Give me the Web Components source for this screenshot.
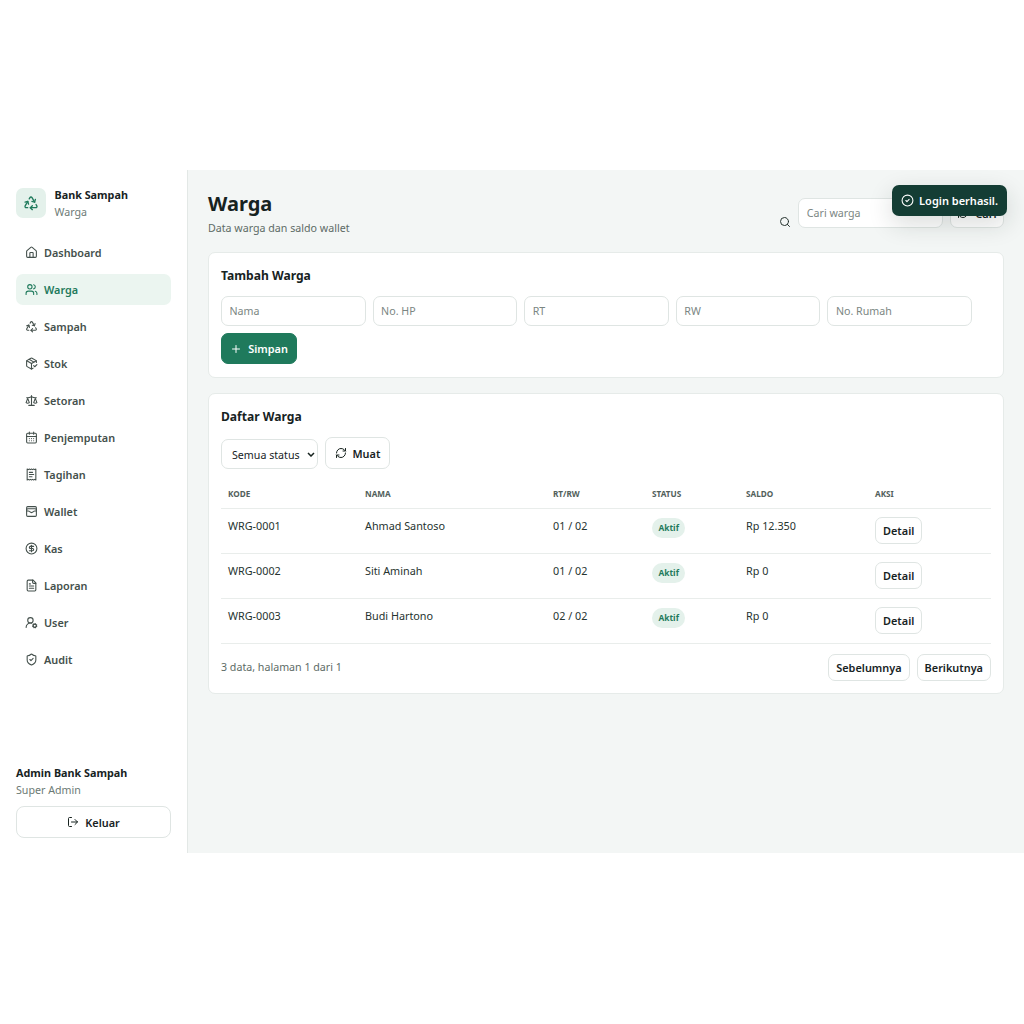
<!DOCTYPE html>
<html lang="id">
<head>
<meta charset="utf-8">
<title>Warga</title>
<style>
  html, body { margin: 0; height: 100%; background: #fff; }
  body { box-sizing: border-box; padding-top: 170px; font-family: "Noto Sans", sans-serif; color: #17231f; }
  bank-app { width: 1024px; }
</style>
</head>
<body>
<bank-app></bank-app>
<script>
const ICONS = {
  recycle: '<path d="M7 19H4.815a1.83 1.83 0 0 1-1.57-.881 1.785 1.785 0 0 1-.004-1.784L7.196 9.5"/><path d="M11 19h8.203a1.83 1.83 0 0 0 1.556-.89 1.784 1.784 0 0 0 0-1.775l-1.226-2.12"/><path d="m14 16-3 3 3 3"/><path d="M8.293 13.596 7.196 9.5 3.1 10.598"/><path d="m9.344 5.811 1.093-1.892A1.83 1.83 0 0 1 11.985 3a1.784 1.784 0 0 1 1.546.888l3.943 6.843"/><path d="m13.378 9.633 4.096 1.098 1.097-4.096"/>',
  house: '<path d="M15 21v-8a1 1 0 0 0-1-1h-4a1 1 0 0 0-1 1v8"/><path d="M3 10a2 2 0 0 1 .709-1.528l7-5.999a2 2 0 0 1 2.582 0l7 5.999A2 2 0 0 1 21 10v9a2 2 0 0 1-2 2H5a2 2 0 0 1-2-2z"/>',
  users: '<path d="M16 21v-2a4 4 0 0 0-4-4H6a4 4 0 0 0-4 4v2"/><circle cx="9" cy="7" r="4"/><path d="M22 21v-2a4 4 0 0 0-3-3.87"/><path d="M16 3.13a4 4 0 0 1 0 7.75"/>',
  package: '<path d="m16 16 2 2 4-4"/><path d="M21 10V8a2 2 0 0 0-1-1.73l-7-4a2 2 0 0 0-2 0l-7 4A2 2 0 0 0 3 8v8a2 2 0 0 0 1 1.73l7 4a2 2 0 0 0 2 0l2-1.14"/><path d="m7.5 4.27 9 5.15"/><polyline points="3.29 7 12 12 20.71 7"/><line x1="12" y1="22" x2="12" y2="12"/>',
  scale: '<path d="m16 16 3-8 3 8c-.87.65-1.92 1-3 1s-2.13-.35-3-1Z"/><path d="m2 16 3-8 3 8c-.87.65-1.92 1-3 1s-2.13-.35-3-1Z"/><path d="M7 21h10"/><path d="M12 3v18"/><path d="M3 7h2c2 0 5-1 7-2 2 1 5 2 7 2h2"/>',
  calendar: '<path d="M8 2v4"/><path d="M16 2v4"/><rect x="3" y="4" width="18" height="18" rx="2"/><path d="M3 10h18"/><path d="M8 14h.01"/><path d="M12 14h.01"/><path d="M16 14h.01"/><path d="M8 18h.01"/><path d="M12 18h.01"/><path d="M16 18h.01"/>',
  receipt: '<path d="M4 2v20l2-1 2 1 2-1 2 1 2-1 2 1 2-1 2 1V2l-2 1-2-1-2 1-2-1-2 1-2-1-2 1Z"/><path d="M14 8H8"/><path d="M16 12H8"/><path d="M13 16H8"/>',
  wallet: '<rect x="3" y="3" width="18" height="18" rx="2"/><path d="M3 9a2 2 0 0 1 2-2h14a2 2 0 0 1 2 2"/><path d="M3 11h3c.8 0 1.6.3 2.1.9l1.1.9c1.6 1.6 4.1 1.6 5.7 0l1.1-.9c.5-.5 1.3-.9 2.1-.9H21"/>',
  dollar: '<circle cx="12" cy="12" r="10"/><path d="M16 8h-6a2 2 0 1 0 0 4h4a2 2 0 1 1 0 4H8"/><path d="M12 18V6"/>',
  file: '<path d="M15 2H6a2 2 0 0 0-2 2v16a2 2 0 0 0 2 2h12a2 2 0 0 0 2-2V7Z"/><path d="M14 2v4a2 2 0 0 0 2 2h4"/><path d="M10 9H8"/><path d="M16 13H8"/><path d="M16 17H8"/>',
  usercog: '<path d="M2 21a8 8 0 0 1 10.434-7.62"/><circle cx="10" cy="8" r="5"/><circle cx="18" cy="18" r="3"/><path d="m19.5 14.3-.4.9"/><path d="m16.9 20.8-.4.9"/><path d="m21.7 19.5-.9-.4"/><path d="m15.2 16.9-.9-.4"/><path d="m21.7 16.5-.9.4"/><path d="m15.2 19.1-.9.4"/><path d="m19.5 21.7-.4-.9"/><path d="m16.9 15.2-.4-.9"/>',
  shield: '<path d="M20 13c0 5-3.5 7.5-7.66 8.95a1 1 0 0 1-.67-.01C7.5 20.5 4 18 4 13V6a1 1 0 0 1 1-1c2 0 4.5-1.2 6.24-2.72a1.17 1.17 0 0 1 1.52 0C14.51 3.81 17 5 19 5a1 1 0 0 1 1 1z"/><path d="m9 12 2 2 4-4"/>',
  logout: '<path d="M9 21H5a2 2 0 0 1-2-2V5a2 2 0 0 1 2-2h4"/><path d="m16 17 5-5-5-5"/><path d="M21 12H9"/>',
  search: '<path d="m21 21-4.34-4.34"/><circle cx="11" cy="11" r="8"/>',
  refresh: '<path d="M3 12a9 9 0 0 1 9-9 9.75 9.75 0 0 1 6.74 2.74L21 8"/><path d="M21 3v5h-5"/><path d="M21 12a9 9 0 0 1-9 9 9.75 9.75 0 0 1-6.74-2.74L3 16"/><path d="M8 16H3v5"/>',
  plus: '<path d="M5 12h14"/><path d="M12 5v14"/>',
  check: '<circle cx="12" cy="12" r="10"/><path d="m9 12 2 2 4-4"/>'
};

class AppIcon extends HTMLElement {
  connectedCallback() {
    const size = this.getAttribute('size') || 13;
    this.attachShadow({ mode: 'open' }).innerHTML = `
      <style>
        :host { display: inline-flex; flex: none; }
        svg { display: block; }
      </style>
      <svg width="${size}" height="${size}" viewBox="0 0 24 24" fill="none" stroke="currentColor"
        stroke-width="2" stroke-linecap="round" stroke-linejoin="round">${ICONS[this.getAttribute('name')]}</svg>`;
  }
}
customElements.define('app-icon', AppIcon);

class NavItem extends HTMLElement {
  connectedCallback() {
    this.attachShadow({ mode: 'open' }).innerHTML = `
      <style>
        :host {
          display: flex; align-items: center; gap: 6px;
          height: 31px; padding: 0 9px; border-radius: 7px;
          font-size: 10.85px; font-weight: 600; color: #44504c;
        }
        :host([active]) { background: #ebf5f0; color: #1f7a5c; }
      </style>
      <app-icon name="${this.getAttribute('icon')}"></app-icon><slot></slot>`;
  }
}
customElements.define('nav-item', NavItem);

class UiButton extends HTMLElement {
  connectedCallback() {
    const icon = this.getAttribute('icon');
    this.attachShadow({ mode: 'open' }).innerHTML = `
      <style>
        :host {
          display: inline-flex; align-items: center; justify-content: center; gap: 6px;
          box-sizing: border-box; height: 27px; padding: 0 7px;
          background: #fff; border: 1px solid #dfe5e3; border-radius: 7px;
          font-size: 10.9px; font-weight: 600; color: #17231f; white-space: nowrap;
        }
        :host([primary]) { background: #1f7a5c; border-color: #1f7a5c; color: #fff; }
      </style>
      ${icon ? `<app-icon name="${icon}" size="${this.getAttribute('icon-size') || 12}"></app-icon>` : ''}<slot></slot>`;
  }
}
customElements.define('ui-button', UiButton);

class SideBar extends HTMLElement {
  connectedCallback() {
    const items = [
      ['house', 'Dashboard'], ['users', 'Warga', 1], ['recycle', 'Sampah'], ['package', 'Stok'],
      ['scale', 'Setoran'], ['calendar', 'Penjemputan'], ['receipt', 'Tagihan'], ['wallet', 'Wallet'],
      ['dollar', 'Kas'], ['file', 'Laporan'], ['usercog', 'User'], ['shield', 'Audit']
    ];
    this.attachShadow({ mode: 'open' }).innerHTML = `
      <style>
        :host {
          display: flex; flex-direction: column; flex: none; box-sizing: border-box;
          width: 188px; padding: 18px 16px 15px;
          background: #fff; border-right: 1px solid #e3e8e6;
        }
        .brand { display: flex; align-items: center; gap: 8.5px; height: 30px; }
        .brand > div:last-child { margin-top: 2px; }
        .logo {
          display: flex; align-items: center; justify-content: center;
          width: 30px; height: 30px; border-radius: 7px; background: #e4f1eb; color: #1f7a5c;
        }
        .brand b, .who b { display: block; font-size: 10.8px; font-weight: 700; line-height: 16px; color: #17231f; }
        .brand span, .who span { display: block; font-size: 10.67px; line-height: 18px; color: #6c7a75; }
        nav { display: flex; flex-direction: column; gap: 6px; margin-top: 19px; }
        .who { margin-top: auto; margin-bottom: 7px; }
        ui-button { height: 32px; border-radius: 8px; }
      </style>
      <div class="brand">
        <div class="logo"><app-icon name="recycle" size="16"></app-icon></div>
        <div><b>Bank Sampah</b><span>Warga</span></div>
      </div>
      <nav>${items.map(i => `<nav-item icon="${i[0]}"${i[2] ? ' active' : ''}>${i[1]}</nav-item>`).join('')}</nav>
      <div class="who"><b>Admin Bank Sampah</b><span>Super Admin</span></div>
      <ui-button icon="logout">Keluar</ui-button>`;
  }
}
customElements.define('side-bar', SideBar);

class CardPanel extends HTMLElement {
  connectedCallback() {
    this.attachShadow({ mode: 'open' }).innerHTML = `
      <style>
        :host {
          display: block; box-sizing: border-box; padding: 12px;
          background: #fff; border: 1px solid #e6ebe9; border-radius: 7px;
        }
        h2 { margin: 1px 0 10px; font-size: 12.1px; line-height: 20px; font-weight: 700; color: #17231f; }
      </style>
      <h2>${this.getAttribute('heading')}</h2><slot></slot>`;
  }
}
customElements.define('card-panel', CardPanel);

class TextField extends HTMLElement {
  connectedCallback() {
    this.attachShadow({ mode: 'open' }).innerHTML = `
      <style>
        :host { display: block; width: 144.6px; flex: none; }
        input {
          display: block; box-sizing: border-box; width: 100%; height: 30px; padding: 0 7.5px;
          background: #fff; border: 1px solid #dfe5e3; border-radius: 7px; outline: 0;
          font: 400 10.67px "Noto Sans", sans-serif; color: #17231f;
        }
        input::placeholder { color: #7b8683; opacity: 1; }
      </style>
      <input placeholder="${this.getAttribute('placeholder')}">`;
  }
}
customElements.define('text-field', TextField);

class WargaForm extends HTMLElement {
  connectedCallback() {
    const fields = ['Nama', 'No. HP', 'RT', 'RW', 'No. Rumah'];
    this.attachShadow({ mode: 'open' }).innerHTML = `
      <style>
        :host { display: flex; flex-wrap: wrap; gap: 7px; margin-bottom: 1px; }
        ui-button { height: 31px; padding: 0 10px; width: 76px; }
      </style>
      ${fields.map(f => `<text-field placeholder="${f}"></text-field>`).join('')}
      <ui-button primary icon="plus">Simpan</ui-button>`;
  }
}
customElements.define('warga-form', WargaForm);

class WargaTable extends HTMLElement {
  connectedCallback() {
    const rows = [
      ['WRG-0001', 'Ahmad Santoso', '01 / 02', 'Rp 12.350'],
      ['WRG-0002', 'Siti Aminah', '01 / 02', 'Rp 0'],
      ['WRG-0003', 'Budi Hartono', '02 / 02', 'Rp 0']
    ];
    this.attachShadow({ mode: 'open' }).innerHTML = `
      <style>
        :host { display: block; }
        .filters { display: flex; align-items: flex-end; gap: 7px; }
        .pick { position: relative; display: block; width: 97px; height: 30px; }
        .pick svg { position: absolute; right: 3.5px; top: 13px; pointer-events: none; }
        select {
          appearance: none; display: block; box-sizing: border-box; width: 100%; height: 30px; padding: 1px 0 0 10px;
          background: #fff; border: 1px solid #dfe5e3; border-radius: 7px;
          font: 400 10.67px "Noto Sans", sans-serif; color: #17231f;
        }
        .filters ui-button { height: 32px; padding: 0 8.5px; }
        table { width: 100%; margin-top: 11px; border-collapse: collapse; table-layout: fixed; font-size: 10.8px; }
        th {
          height: 26px; padding: 0 7px 2px; text-align: left; font-size: 8.2px; font-weight: 700;
          color: #52605b; border-bottom: 1px solid #e9edeb;
        }
        td {
          height: 45px; padding: 7px 7px 0; vertical-align: top; line-height: 20px;
          color: #26332f; border-bottom: 1px solid #e9edeb; box-sizing: border-box;
        }
        .badge {
          display: inline-flex; align-items: center; height: 20px; padding: 0 6.5px; margin-top: 2px;
          border-radius: 10px; background: #e4f1eb; color: #1f7a5c; font-size: 8.4px; font-weight: 700; line-height: 20px;
        }
        td ui-button { height: 27px; margin-top: 1px; }
        .foot { display: flex; align-items: center; justify-content: space-between; margin-top: 10px; font-size: 10.67px; color: #5d6b66; }
        .foot > span { margin-bottom: 1px; }
        .pager { display: flex; gap: 7px; }
      </style>
      <div class="filters">
        <div class="pick">
          <select><option>Semua status</option></select>
          <svg width="8" height="5" viewBox="0 0 8 5" fill="none" stroke="#17231f" stroke-width="1.5"><path d="M1 1l3 3 3-3"/></svg>
        </div>
        <ui-button icon="refresh">Muat</ui-button>
      </div>
      <table>
        <colgroup><col style="width:137px"><col style="width:188px"><col style="width:99px"><col style="width:94px"><col style="width:129px"><col></colgroup>
        <thead><tr><th>KODE</th><th>NAMA</th><th>RT/RW</th><th>STATUS</th><th>SALDO</th><th>AKSI</th></tr></thead>
        <tbody>${rows.map(r => `<tr><td>${r[0]}</td><td>${r[1]}</td><td>${r[2]}</td><td><span class="badge">Aktif</span></td><td>${r[3]}</td><td><ui-button>Detail</ui-button></td></tr>`).join('')}</tbody>
      </table>
      <div class="foot"><span>3 data, halaman 1 dari 1</span>
        <div class="pager"><ui-button>Sebelumnya</ui-button><ui-button>Berikutnya</ui-button></div>
      </div>`;
  }
}
customElements.define('warga-table', WargaTable);

class PageHead extends HTMLElement {
  connectedCallback() {
    this.attachShadow({ mode: 'open' }).innerHTML = `
      <style>
        :host { display: flex; align-items: flex-end; justify-content: space-between; }
        h1 { margin: 0; font-size: 20px; line-height: 27px; font-weight: 700; color: #17231f; }
        p { margin: 3px 0 0; font-size: 10.67px; line-height: 16px; color: #5d6b66; }
        .search { display: flex; align-items: center; gap: 7px; margin-bottom: 8px; }
        .search > app-icon { color: #26332f; margin-top: 18px; }
        ui-button { height: 30px; padding: 0 6.5px; }
      </style>
      <div><h1>Warga</h1><p>Data warga dan saldo wallet</p></div>
      <div class="search">
        <app-icon name="search" size="12"></app-icon>
        <text-field placeholder="Cari warga"></text-field>
        <ui-button icon="refresh">Cari</ui-button>
      </div>`;
  }
}
customElements.define('page-head', PageHead);

class ToastMsg extends HTMLElement {
  connectedCallback() {
    this.attachShadow({ mode: 'open' }).innerHTML = `
      <style>
        :host {
          position: absolute; top: 15px; right: 17px; z-index: 5;
          display: flex; align-items: center; gap: 5px; box-sizing: border-box; height: 31px; padding: 0 9px;
          background: #143d34; color: #fff; border-radius: 7px;
          font-size: 11px; font-weight: 600; box-shadow: 0 8px 24px rgba(23, 35, 31, .16);
        }
      </style>
      <app-icon name="check" size="13"></app-icon><slot></slot>`;
  }
}
customElements.define('toast-msg', ToastMsg);

class BankApp extends HTMLElement {
  connectedCallback() {
    this.attachShadow({ mode: 'open' }).innerHTML = `
      <style>
        :host { display: flex; position: relative; height: 683px; background: #f3f6f5; }
        main { flex: 1; min-width: 0; padding: 20px 20px 0; }
        card-panel { margin-top: 15px; }
        page-head + card-panel { margin-top: 16px; }
      </style>
      <side-bar></side-bar>
      <main>
        <page-head></page-head>
        <card-panel heading="Tambah Warga"><warga-form></warga-form></card-panel>
        <card-panel heading="Daftar Warga"><warga-table></warga-table></card-panel>
      </main>
      <toast-msg>Login berhasil.</toast-msg>`;
  }
}
customElements.define('bank-app', BankApp);
</script>
</body>
</html>
